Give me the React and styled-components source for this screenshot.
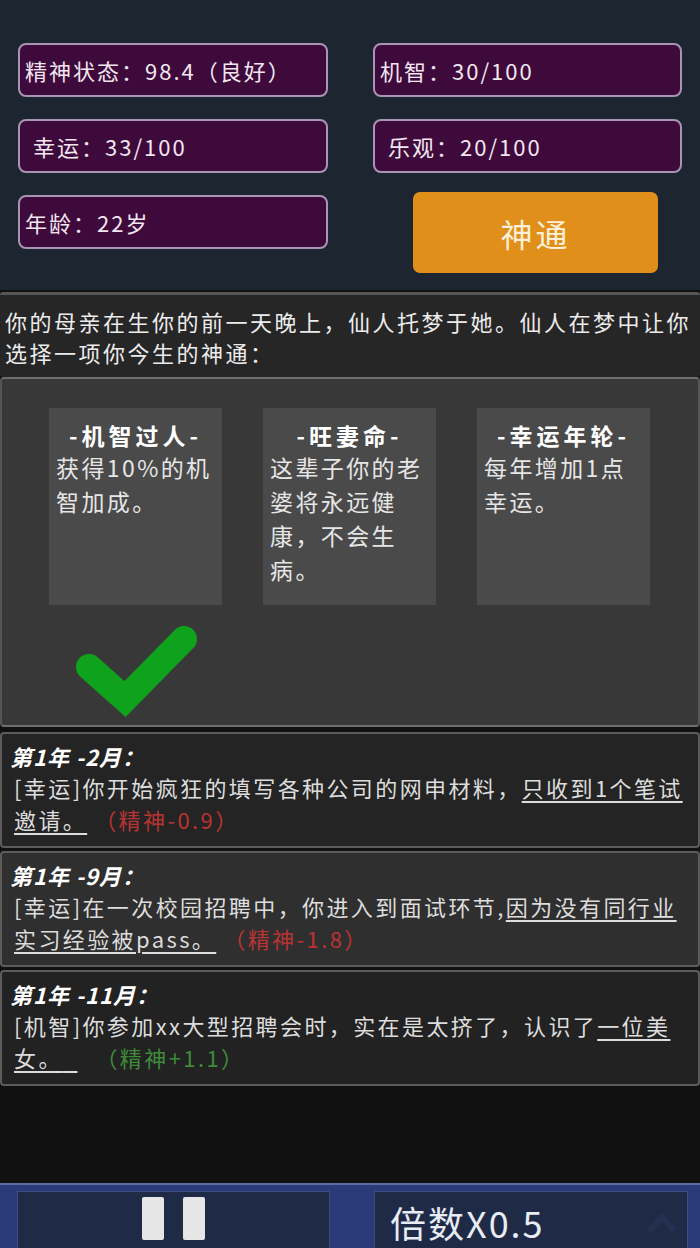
import React from 'react';
import styled, { createGlobalStyle } from 'styled-components';

const GlobalStyle = createGlobalStyle`
  html, body {
    margin: 0;
    padding: 0;
    background: #111111;
  }
  body {
    font-family: "Noto Sans CJK SC", "Noto Sans", sans-serif;
  }
`;

const Screen = styled.div`
  width: 700px;
  height: 1248px;
  display: flex;
  flex-direction: column;
  background: #111111;
  overflow: hidden;
  color: #eaeaea;
`;

const Header = styled.header`
  flex-shrink: 0;
  box-sizing: border-box;
  height: 290px;
  background: #1d2530;
  padding: 43px 18px 0 18px;
  display: grid;
  grid-template-columns: 310px 309px;
  grid-auto-rows: 54px;
  column-gap: 45px;
  row-gap: 22px;
  align-content: start;
`;

const StatBox = styled.div`
  box-sizing: border-box;
  height: 54px;
  border: 2px solid #a994b4;
  border-radius: 8px;
  background: #3d0a3b;
  display: flex;
  align-items: center;
  padding-left: ${p => (p.$indent ? 13 : 5)}px;
  font-size: 22px;
  letter-spacing: 2px;
  color: #f3e6f0;
  white-space: nowrap;
`;

const PowerButton = styled.button`
  grid-column: 2;
  grid-row: 3;
  align-self: start;
  box-sizing: border-box;
  margin: -3px 0 0 40px;
  width: 245px;
  height: 81px;
  border: none;
  border-radius: 7px;
  background: #e0901a;
  color: #fdf0d8;
  font-family: inherit;
  font-size: 32px;
  letter-spacing: 3px;
  padding: 0;
`;

const Intro = styled.section`
  flex-shrink: 0;
  margin-top: 2px;
  border-top: 3px solid #555555;
  border-radius: 3px;
  background: #262626;
  padding: 11px 4px 9px 5px;
  font-size: 22px;
  line-height: 31px;
  letter-spacing: 2.5px;
  color: #ececec;
`;

const ChoicePanel = styled.section`
  flex-shrink: 0;
  border: 2px solid #6e6e6e;
  border-left-color: #555555;
  border-right-color: #555555;
  border-radius: 4px;
  background: #383838;
  padding: 29px 0 6px 47px;
`;

const CardRow = styled.div`
  display: flex;
  gap: 41px;
`;

const Card = styled.div`
  box-sizing: border-box;
  width: 173px;
  height: 197px;
  background: #4a4a4a;
  padding: 12px 7px 0 7px;
`;

const CardTitle = styled.div`
  text-align: center;
  font-weight: 700;
  font-size: 23px;
  line-height: 30px;
  letter-spacing: 4px;
  color: #ffffff;
`;

const CardBody = styled.div`
  font-size: 23px;
  line-height: 34px;
  letter-spacing: 2.4px;
  color: #e6e6e6;
`;

const CheckRow = styled.div`
  margin: 14px 0 0 20px;
  height: 100px;
`;

const Entry = styled.article`
  flex-shrink: 0;
  margin-top: ${p => p.$gap}px;
  border: 2px solid #5c5c5c;
  border-radius: 4px;
  background: ${p => p.$bg};
  padding: 7px 10px 11px 8px;
`;

const EntryTitle = styled.div`
  font-size: 22px;
  line-height: 30px;
  font-weight: 700;
  font-style: italic;
  letter-spacing: 1px;
  color: #ffffff;
`;

const EntryText = styled.div`
  margin-left: 4px;
  font-size: 22px;
  line-height: 32px;
  letter-spacing: 2.4px;
  color: #dddddd;
`;

const Marked = styled.span`
  text-decoration: underline;
  text-underline-offset: 4px;
`;

const Delta = styled.span`
  padding-left: 18px;
  color: ${p => (p.$good ? '#3f8a3a' : '#b83434')};
`;

const Filler = styled.div`
  flex: 1;
  background: #111111;
`;

const BottomBar = styled.footer`
  flex-shrink: 0;
  box-sizing: border-box;
  height: 65px;
  background: #2b3a78;
  border-top: 2px solid #5c6ca4;
  padding: 6px 12px 0 17px;
  display: flex;
  gap: 44px;
  overflow: hidden;
`;

const BarButton = styled.div`
  box-sizing: border-box;
  width: ${p => p.$w}px;
  height: 62px;
  background: #1f2a47;
  border: 1px solid #3e4c80;
  display: flex;
  align-items: flex-start;
  justify-content: ${p => (p.$center ? 'center' : 'space-between')};
  padding: ${p => (p.$center ? '5px 0 0 0' : '9px 8px 0 15px')};
  gap: 19px;
`;

const PauseBar = styled.div`
  width: 22px;
  height: 43px;
  background: #e6e6e6;
  border-radius: 2px;
`;

const SpeedText = styled.span`
  font-size: 36px;
  line-height: 42px;
  letter-spacing: 2px;
  color: #e8ecf4;
`;

const cards = [
  { title: '-机智过人-', body: '获得10%的机智加成。' },
  { title: '-旺妻命-', body: '这辈子你的老婆将永远健康，不会生病。' },
  { title: '-幸运年轮-', body: '每年增加1点幸运。' },
];

export default function App() {
  return (
    <>
      <GlobalStyle />
      <Screen>
        <Header>
          <StatBox>精神状态：98.4（良好）</StatBox>
          <StatBox>机智：30/100</StatBox>
          <StatBox $indent>幸运：33/100</StatBox>
          <StatBox $indent>乐观：20/100</StatBox>
          <StatBox>年龄：22岁</StatBox>
          <PowerButton>神通</PowerButton>
        </Header>

        <Intro>你的母亲在生你的前一天晚上，仙人托梦于她。仙人在梦中让你选择一项你今生的神通：</Intro>

        <ChoicePanel>
          <CardRow>
            {cards.map(c => (
              <Card key={c.title}>
                <CardTitle>{c.title}</CardTitle>
                <CardBody>{c.body}</CardBody>
              </Card>
            ))}
          </CardRow>
          <CheckRow>
            <svg width="140" height="100" viewBox="0 0 140 100">
              <polyline
                points="20,48 56,80 115,20"
                fill="none"
                stroke="#0fa21c"
                strokeWidth="26"
                strokeLinecap="round"
                strokeLinejoin="miter"
              />
            </svg>
          </CheckRow>
        </ChoicePanel>

        <Entry $gap={5} $bg="#242424">
          <EntryTitle>第1年 -2月：</EntryTitle>
          <EntryText>
            [幸运]你开始疯狂的填写各种公司的网申材料，<Marked>只收到1个笔试邀请。</Marked>
            <Delta>（精神-0.9）</Delta>
          </EntryText>
        </Entry>

        <Entry $gap={3} $bg="#2f2f2f">
          <EntryTitle>第1年 -9月：</EntryTitle>
          <EntryText>
            [幸运]在一次校园招聘中，你进入到面试环节,<Marked>因为没有同行业实习经验被pass。</Marked>
            <Delta>（精神-1.8）</Delta>
          </EntryText>
        </Entry>

        <Entry $gap={3} $bg="#222222">
          <EntryTitle>第1年 -11月：</EntryTitle>
          <EntryText>
            [机智]你参加xx大型招聘会时，实在是太挤了，认识了<Marked>一位美女。{'\u00a0\u00a0'}</Marked>
            <Delta $good>（精神+1.1）</Delta>
          </EntryText>
        </Entry>

        <Filler />

        <BottomBar>
          <BarButton $w={313} $center>
            <PauseBar />
            <PauseBar />
          </BarButton>
          <BarButton $w={314}>
            <SpeedText>倍数X0.5</SpeedText>
            <svg width="34" height="28" viewBox="0 0 34 28" style={{ marginTop: 6 }}>
              <polyline points="4,24 17,10 30,24" fill="none" stroke="#243050" strokeWidth="6" />
            </svg>
          </BarButton>
        </BottomBar>
      </Screen>
    </>
  );
}
